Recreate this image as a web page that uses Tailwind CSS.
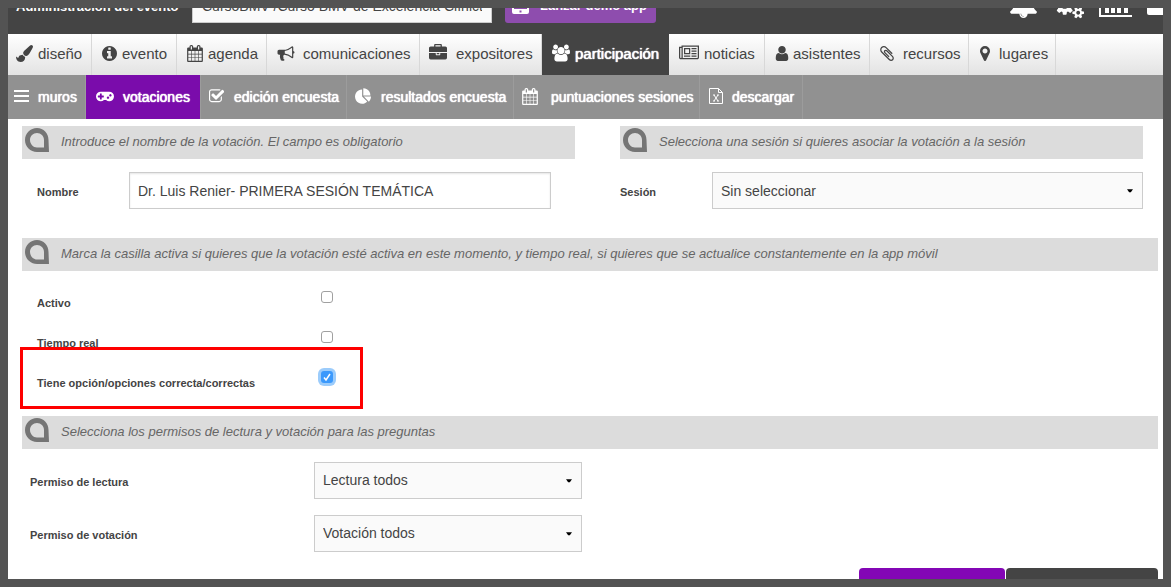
<!DOCTYPE html>
<html lang="es">
<head>
<meta charset="utf-8">
<title>Administración del evento</title>
<script src="https://cdn.jsdelivr.net/npm/@tailwindcss/browser@4"></script>
</head>
<body class="h-screen bg-[#535353] p-2 font-['Liberation_Sans',Arial,sans-serif] text-[#444]">
<svg class="hidden" aria-hidden="true">
  <symbol id="calendar" viewBox="64 0 1664 1792"><path d="M192 1664h288v-288h-288v288zm352 0h320v-288h-320v288zm-352-352h288v-320h-288v320zm352 0h320v-320h-320v320zm-352-384h288v-288h-288v288zm736 736h320v-288h-320v288zm-384-736h320v-288h-320v288zm768 736h288v-288h-288v288zm-384-352h320v-320h-320v320zm-352-864v-288q0-13-9.5-22.5t-22.5-9.5h-64q-13 0-22.5 9.5t-9.5 22.5v288q0 13 9.5 22.5t22.5 9.5h64q13 0 22.5-9.5t9.5-22.5zm736 864h288v-320h-288v320zm-384-384h320v-288h-320v288zm384 0h288v-288h-288v288zm32-480v-288q0-13-9.5-22.5t-22.5-9.5h-64q-13 0-22.5 9.5t-9.5 22.5v288q0 13 9.5 22.5t22.5 9.5h64q13 0 22.5-9.5t9.5-22.5zm384-64v1280q0 52-38 90t-90 38h-1408q-52 0-90-38t-38-90v-1280q0-52 38-90t90-38h128v-96q0-66 47-113t113-47h64q66 0 113 47t47 113v96h384v-96q0-66 47-113t113-47h64q66 0 113 47t47 113v96h128q52 0 90 38t38 90z"/></symbol>
  <symbol id="drop" viewBox="0 0 24 24"><path fill-rule="evenodd" d="M12 0C18.600 0 23.500 5.400 23.500 12L24 24H12C5.400 24 0 18.600 0 12S5.400 0 12 0ZM12 5C8.100 5 5 8.100 5 12S8.100 19.500 12 19.500H19V12C19 8.100 15.900 5 12 5Z"/></symbol>
  <symbol id="caret" viewBox="0 0 7 4"><path d="M0 0h7L4.500 3.500h-2z"/></symbol>
</svg>
<div class="flex h-full flex-col overflow-hidden bg-white">
  <header class="-mt-8 flex h-[58px] shrink-0 items-end overflow-hidden bg-[#444] pb-[11px] pl-2 text-white">
    <h1 class="h-[37px] w-44 shrink-0 pt-[3px] text-[13px] leading-9 font-bold whitespace-nowrap">Administración del evento</h1>
    <input aria-label="Evento" class="h-[37px] w-[300px] shrink-0 border border-[#ccc] bg-[#fafafa] px-[9px] pt-[2px] text-sm text-[#444]" value="CursoBMV /Curso BMV de Excelencia Clínict">
    <button class="ml-[13px] flex h-[37px] w-[151px] shrink-0 items-center gap-[11px] rounded-[3px] bg-[#8e4dae] pt-[2px] pl-[7px] text-[13px] font-bold whitespace-nowrap">
      <svg class="mb-[2px] h-[18px] w-[17px]" viewBox="0 0 17 18" fill="currentColor"><path fill-rule="evenodd" d="M2 0h13a2 2 0 0 1 2 2v14a2 2 0 0 1-2 2H2a2 2 0 0 1-2-2V2a2 2 0 0 1 2-2zM2 2v11h13V2zM7.500 14.500v2h2v-2z"/></svg>
      Lanzar demo app</button>
    <div class="ml-auto flex shrink-0 items-end">
      <a href="#" aria-label="Avisos" class="mb-[5px] mr-[18px]"><svg class="h-[29px] w-[27px]" viewBox="64 0 1664 1792" fill="currentColor"><path d="M912 1696q0-16-16-16-59 0-101.500-42.500t-42.500-101.500q0-16-16-16t-16 16q0 73 51.500 124.500t124.500 51.500q16 0 16-16zm816-288q0 52-38 90t-90 38h-448q0 106-75 181t-181 75-181-75-75-181h-448q-52 0-90-38t-38-90q50-42 91-88t85-119.500 74.500-158.500 50-206 19.500-260q0-152 117-282.500t307-158.500q-8-19-8-39 0-40 28-68t68-28 68 28 28 68q0 20-8 39 190 28 307 158.500t117 282.500q0 139 19.500 260t50 206 74.500 158.500 85 119.500 91 88z"/></svg></a>
      <a href="#" aria-label="Ajustes" class="mb-1 mr-[15px]"><svg class="h-[28px] w-[29px]" viewBox="0 0 1920 1792" fill="currentColor"><path d="M896 896q0-106-75-181t-181-75-181 75-75 181 75 181 181 75 181-75 75-181zm768 512q0-52-38-90t-90-38-90 38-38 90q0 53 37.500 90.500t90.500 37.500 90.500-37.500 37.500-90.500zm-384-603v185q0 10-7 19.500t-16 10.500l-155 24q-11 35-32 76 34 48 90 115 7 11 7 20 0 12-7 19-23 30-82.500 89.500t-78.500 59.500q-11 0-21-7l-115-90q-37 19-77 31-11 108-23 155-7 24-30 24h-186q-11 0-20-7.500t-10-17.500l-23-153q-34-10-75-31l-118 89q-7 7-20 7-11 0-21-8-144-133-144-160 0-9 7-19 10-14 41-53t47-61q-23-44-35-82l-152-24q-10-1-17-9.500t-7-19.500v-185q0-10 7-19.500t16-10.500l155-24q11-35 32-76-34-48-90-115-7-11-7-20 0-12 7-20 22-30 82-89t79-59q11 0 21 7l115 90q34-18 77-32 11-108 23-154 7-24 30-24h186q11 0 20 7.500t10 17.500l23 153q34 10 75 31l118-89q8-7 20-7 11 0 21 8 144 133 144 160 0 8-7 19-12 16-42 54t-45 60q23 48 34 82l152 23q10 2 17 10.500t7 19.500zm640 533v140q0 16-149 31-12 27-30 52 51 113 51 138 0 4-4 7-122 71-124 71-8 0-46-47t-52-68q-20 2-30 2t-30-2q-14 21-52 68t-46 47q-2 0-124-71-4-3-4-7 0-25 51-138-18-25-30-52-149-15-149-31v-140q0-16 149-31 13-29 30-52-51-113-51-138 0-4 4-7 4-2 35-20t59-34 30-16q8 0 46 46.500t52 67.500q20-2 30-2t30 2q51-71 92-112l6-2q4 0 124 70 4 3 4 7 0 25-51 138 17 23 30 52 149 15 149 31z"/></svg></a>
      <a href="#" aria-label="Estadísticas" class="mb-[6px] mr-[15px]"><svg class="h-[26px] w-[33px]" viewBox="0 0 33 26" fill="currentColor"><path d="M0 0h2v24h31v2H0zM6 12h4v10H6zM12 6h4v16h-4zM18 9h4v13h-4zM25 3h4v19h-4z"/></svg></a>
      <a href="#" aria-label="Pantalla" class="mb-2 h-6 w-4 overflow-hidden"><svg class="h-6 w-8" viewBox="0 0 32 24" fill="currentColor"><rect width="32" height="24" rx="2"/></svg></a>
    </div>
  </header>

  <nav aria-label="Secciones" class="flex h-[41px] shrink-0 bg-linear-to-b from-white to-[#e3e3e3] text-[15px] whitespace-nowrap [&>a]:flex [&>a]:shrink-0 [&>a]:items-center [&>a]:border-r [&>a]:border-[#d8d8d8] [&_svg]:shrink-0 [&_svg]:fill-current [&_svg]:mb-[3px]">
    <a href="#" class="w-[84px] gap-[5px] pl-2"><svg class="h-[17px] w-[17px]" viewBox="0 0 1792 1792"><path d="M1615 0q70 0 122.500 46.500t52.500 116.500q0 63-45 151-332 629-465 752-97 91-218 91-126 0-216.500-92.500t-90.500-219.500q0-128 92-212l638-579q59-54 130-54zm-909 1034q39 76 106.500 130t150.500 76l1 71q4 213-129.500 347t-348.500 134q-123 0-218-46.500t-152.500-127.500-86.500-183-29-220q7 5 41 30t62 44.500 59 36.500 46 17q41 0 55-37 25-66 57.500-112.500t69.500-76 88-47.500 103-25.500 125-10.500z"/></svg>diseño</a>
    <a href="#" class="w-[85px] gap-[5px] pl-[10px]"><svg class="h-[15px] w-[15px]" viewBox="128 128 1536 1536"><path d="M1152 1376v-160q0-14-9-23t-23-9h-96v-512q0-14-9-23t-23-9h-320q-14 0-23 9t-9 23v160q0 14 9 23t23 9h96v320h-96q-14 0-23 9t-9 23v160q0 14 9 23t23 9h448q14 0 23-9t9-23zm-128-896v-160q0-14-9-23t-23-9h-192q-14 0-23 9t-9 23v160q0 14 9 23t23 9h192q14 0 23-9t9-23zm640 416q0 209-103 385.500t-279.500 279.500-385.500 103-385.500-103-279.500-279.500-103-385.500 103-385.500 279.500-279.500 385.500-103 385.500 103 279.500 279.500 103 385.500z"/></svg>evento</a>
    <a href="#" class="w-[90px] gap-[5px] pl-[10px]"><svg class="h-[17px] w-4"><use href="#calendar"/></svg>agenda</a>
    <a href="#" class="w-[153px] gap-2 pl-[10px]"><svg class="h-[17px] w-[18px]" viewBox="0 0 1792 1792"><path d="M1664 640q53 0 90.500 37.500t37.500 90.500-37.500 90.500-90.500 37.500v384q0 52-38 90t-90 38q-417-347-812-380-58 19-91 66t-31 100.500 40 92.500q-20 33-23 65.500t6 58 33.500 55 48 50 61.500 50.500q-29 58-111.500 83t-168.500 11.500-132-55.500q-7-23-29.500-87.500t-32-94.500-23-89-15-101 3.500-98.500 22-110.500h-122q-66 0-113-47t-47-113v-192q0-66 47-113t113-47h480q435 0 896-384 52 0 90 38t38 90v384zm-128 604v-954q-394 302-768 343v270q377 42 768 341z"/></svg>comunicaciones</a>
    <a href="#" class="w-[122px] gap-[9px] pl-[9px]"><svg class="h-[18px] w-[18px]" viewBox="0 0 1792 1792"><path d="M640 256h512v-128h-512v128zm1152 640v480q0 66-47 113t-113 47h-1472q-66 0-113-47t-47-113v-480h672v160q0 26 19 45t45 19h320q26 0 45-19t19-45v-160h672zm-768 0v128h-256v-128h256zm768-480v384h-1792v-384q0-66 47-113t113-47h352v-160q0-40 28-68t68-28h576q40 0 68 28t28 68v160h352q66 0 113 47t47 113z"/></svg>expositores</a>
    <a href="#" aria-current="page" class="w-[127px] gap-[5px] border-r-0! bg-[#444] pl-[10px] text-white [text-shadow:0_0_1px_#fff,0_0_1px_#fff]"><svg class="h-[18px] w-[18px]" viewBox="64 0 1920 1792"><path d="M657 896q-162 5-265 128h-134q-82 0-138-40.500t-56-118.500q0-353 124-353 6 0 43.500 21t97.500 42.500 119 21.500q67 0 133-23-5 37-5 66 0 139 81 256zm1071 637q0 120-73 189.500t-194 69.500h-874q-121 0-194-69.500t-73-189.500q0-53 3.500-103.500t14-109 26.500-108.500 43-97.500 62-81 85.500-53.500 111.500-20q10 0 43 21.500t73 48 107 48 135 21.500 135-21.500 107-48 73-48 43-21.500q61 0 111.500 20t85.500 53.500 62 81 43 97.500 26.500 108.500 14 109 3.500 103.500zm-1024-1277q0 106-75 181t-181 75-181-75-75-181 75-181 181-75 181 75 75 181zm704 384q0 159-112.500 271.500t-271.500 112.500-271.500-112.500-112.500-271.500 112.500-271.500 271.500-112.500 271.500 112.500 112.500 271.500zm576 225q0 78-56 118.500t-138 40.500h-134q-103-123-265-128 81-117 81-256 0-29-5-66 66 23 133 23 59 0 119-21.500t97.500-42.500 43.500-21q124 0 124 353zm-128-609q0 106-75 181t-181 75-181-75-75-181 75-181 181-75 181 75 75 181z"/></svg>participación</a>
    <a href="#" class="w-24 gap-[5px] pl-[10px]"><svg class="h-[18px] w-5" viewBox="0 0 2048 1792"><path d="M1024 512h-384v384h384v-384zm128 640v128h-640v-128h640zm0-768v640h-640v-640h640zm640 768v128h-512v-128h512zm0-256v128h-512v-128h512zm0-256v128h-512v-128h512zm0-256v128h-512v-128h512zm-1536 960v-960h-128v960q0 26 19 45t45 19 45-19 19-45zm1664 0v-1088h-1536v1088q0 33-11 64h1483q26 0 45-19t19-45zm128-1216v1216q0 80-56 136t-136 56h-1664q-80 0-136-56t-56-136v-1088h256v-128h1792z"/></svg>noticias</a>
    <a href="#" class="w-[105px] gap-1 pl-[10px]"><svg class="h-[15px] w-[14px]" viewBox="256 128 1280 1536"><path d="M1536 1399q0 109-62.500 187t-150.500 78h-854q-88 0-150.500-78t-62.500-187q0-85 8.500-160.500t31.500-152 58.500-131 94-89 134.500-34.500q131 128 313 128t313-128q76 0 134.500 34.500t94 89 58.500 131 31.500 152 8.500 160.500zm-256-887q0 159-112.500 271.500t-271.500 112.500-271.500-112.500-112.500-271.500 112.500-271.500 271.500-112.500 271.500 112.500 112.500 271.500z"/></svg>asistentes</a>
    <a href="#" class="w-[99px] gap-[9px] pl-[10px]"><svg class="h-[15px] w-[14px]" viewBox="196 128 1400 1536"><path d="M1596 1385q0 117-79 196t-196 79q-135 0-235-100l-777-776q-113-115-113-271 0-159 110-270t269-111q158 0 273 113l605 606q10 10 10 22 0 16-30.500 46.500t-46.500 30.500q-13 0-23-10l-606-607q-79-77-181-77-106 0-179 75t-73 181q0 105 76 181l776 777q63 63 145 63 64 0 106-42t42-106q0-82-63-145l-581-581q-26-24-60-24-29 0-48 19t-19 48q0 32 25 59l410 410q10 10 10 22 0 16-31 47t-47 31q-12 0-22-10l-410-410q-63-61-63-149 0-82 57-139t139-57q88 0 149 63l581 581q100 98 100 235z"/></svg>recursos</a>
    <a href="#" class="w-[87px] gap-[9px] pl-[11px]"><svg class="h-[15px] w-[10px]" viewBox="384 128 1024 1536"><path d="M1152 640q0-106-75-181t-181-75-181 75-75 181 75 181 181 75 181-75 75-181zm256 0q0 109-33 179l-364 774q-16 33-47.500 52t-67.500 19-67.500-19-46.500-52l-365-774q-33-70-33-179 0-212 150-362t362-150 362 150 150 362z"/></svg>lugares</a>
  </nav>

  <nav aria-label="Participación" class="flex h-11 shrink-0 bg-[#919191] text-sm whitespace-nowrap text-white [text-shadow:0_0_1px_#fff,0_0_1px_#fff] [&>a]:flex [&>a]:shrink-0 [&>a]:items-center [&>a]:border-r [&>a]:border-[#9c9c9c] [&_svg]:mb-[2px] [&_svg]:shrink-0 [&_svg]:fill-current">
    <a href="#" class="w-[78px] gap-[9px] pl-[6px]"><svg class="h-3 w-[15px]" viewBox="0 0 15 12"><path d="M0 0h15v2H0zM0 5h15v2H0zM0 10h15v2H0z"/></svg>muros</a>
    <a href="#" aria-current="page" class="w-[115px] gap-[9px] bg-[#7a0cab] pl-[10px]"><svg class="h-[17px] w-[18px]" viewBox="0 128 1920 1792"><path d="M832 1088v-128q0-14-9-23t-23-9h-192v-192q0-14-9-23t-23-9h-128q-14 0-23 9t-9 23v192h-192q-14 0-23 9t-9 23v128q0 14 9 23t23 9h192v192q0 14 9 23t23 9h128q14 0 23-9t9-23v-192h192q14 0 23-9t9-23zm576 64q0-53-37.500-90.500t-90.500-37.500-90.500 37.500-37.500 90.500 37.500 90.500 90.500 37.500 90.500-37.500 37.500-90.500zm256-256q0-53-37.500-90.500t-90.500-37.500-90.500 37.500-37.500 90.500 37.500 90.500 90.500 37.500 90.500-37.500 37.500-90.500zm256 128q0 212-150 362t-362 150q-192 0-338-128h-220q-146 128-338 128-212 0-362-150t-150-362 150-362 362-150h896q212 0 362 150t150 362z"/></svg>votaciones</a>
    <a href="#" class="w-[146px] gap-[10px] pl-2"><svg class="h-[14px] w-[15px]" viewBox="64 160 1640 1408"><path d="M1472 930v318q0 119-84.500 203.500t-203.500 84.500h-832q-119 0-203.500-84.500t-84.500-203.500v-832q0-119 84.500-203.500t203.500-84.500h832q63 0 117 25 15 7 18 23 3 17-9 29l-49 49q-10 10-23 10-3 0-9-2-23-6-45-6h-832q-66 0-113 47t-47 113v832q0 66 47 113t113 47h832q66 0 113-47t47-113v-254q0-13 9-22l64-64q10-10 23-10 6 0 12 3 20 8 20 29zm231-489l-814 814q-24 24-57 24t-57-24l-430-430q-24-24-24-57t24-57l110-110q24-24 57-24t57 24l263 263 647-647q24-24 57-24t57 24l110 110q24 24 24 57t-24 57z"/></svg>edición encuesta</a>
    <a href="#" class="w-[167px] gap-[10px] pl-2"><svg class="h-4 w-4" viewBox="0 0 1728 1664"><path d="M768 890l546 546q-106 108-247.500 168t-298.500 60q-209 0-385.500-103t-279.500-279.500-103-385.500 103-385.500 279.500-279.500 385.500-103v762zm187 6h773q0 157-60 298.500t-168 247.500zm709-128h-768v-768q209 0 385.500 103t279.500 279.500 103 385.500z"/></svg>resultados encuesta</a>
    <a href="#" class="w-[186px] gap-[13px] pl-2"><svg class="h-[17px] w-4"><use href="#calendar"/></svg>puntuaciones sesiones</a>
    <a href="#" class="w-[103px] gap-[9px] pl-[9px]"><svg class="h-4 w-[14px]" viewBox="0 0 14 16"><path fill="none" stroke="currentColor" d="M.500.500h9l4 4v11H.500zM9.500.500v4h4M5 7l4 6M9 7l-4 6M4 7h2M8 7h2M4 13h2M8 13h2"/></svg>descargar</a>
  </nav>

  <form class="flex flex-col pt-[7px] pr-[5px] pl-[14px] text-[11px] font-bold">
    <div class="grid grid-cols-[553fr_523fr] gap-x-[45px] gap-y-[13px] pr-[15px]">
      <p class="flex h-[33px] gap-3 bg-[#dcdcdc] pt-[2px] pl-[3px] text-[13px] font-normal text-[#666] italic"><svg class="h-6 w-6 fill-[#757575]"><use href="#drop"/></svg><span class="leading-7">Introduce el nombre de la votación. El campo es obligatorio</span></p>
      <p class="flex h-[33px] gap-3 bg-[#dcdcdc] pt-[2px] pl-[3px] text-[13px] font-normal text-[#666] italic"><svg class="h-6 w-6 fill-[#757575]"><use href="#drop"/></svg><span class="leading-7">Selecciona una sesión si quieres asociar la votación a la sesión</span></p>
      <div class="flex items-center pr-6 pl-[15px]">
        <label for="nombre" class="w-[92px] shrink-0 pt-1">Nombre</label>
        <input id="nombre" class="h-[37px] min-w-0 flex-1 border border-[#ccc] bg-white px-2 text-sm font-normal shadow-[inset_0_1px_2px_#e5e5e5]" value="Dr. Luis Renier- PRIMERA SESIÓN TEMÁTICA">
      </div>
      <div class="flex items-center">
        <label for="sesion" class="w-[92px] shrink-0 pt-1">Sesión</label>
        <div class="relative flex-1">
          <select id="sesion" class="block h-[37px] w-full appearance-none border border-[#ccc] bg-[#fafafa] px-2 text-sm font-normal"><option>Sin seleccionar</option></select>
          <svg class="pointer-events-none absolute top-[17px] right-[10px] h-1 w-[6px] fill-black"><use href="#caret"/></svg>
        </div>
      </div>
    </div>

    <p class="mt-[29px] flex h-[33px] gap-3 bg-[#dcdcdc] pt-[2px] pl-[3px] text-[13px] font-normal text-[#666] italic"><svg class="h-6 w-6 fill-[#757575]"><use href="#drop"/></svg><span class="leading-7">Marca la casilla activa si quieres que la votación esté activa en este momento, y tiempo real, si quieres que se actualice constantemente en la app móvil</span></p>

    <div class="relative mt-[6px] mb-[19px] flex flex-col pl-[15px]">
      <div class="flex h-10 items-center"><label for="activo" class="w-[284px] pt-3">Activo</label><input id="activo" type="checkbox" class="h-3 w-3 appearance-none rounded-[3px] border border-[#a0a0a0] bg-white"></div>
      <div class="flex h-10 items-center"><label for="tiempo" class="w-[284px] pt-3">Tiempo real</label><input id="tiempo" type="checkbox" class="h-3 w-3 appearance-none rounded-[3px] border border-[#a0a0a0] bg-white"></div>
      <div class="flex h-10 items-center"><label for="correcta" class="w-[284px] pt-3">Tiene opción/opciones correcta/correctas</label>
        <span class="relative flex h-3 w-3"><input id="correcta" type="checkbox" checked class="h-3 w-3 appearance-none rounded-[3px] bg-[#3b99fc] ring-3 ring-[#9cccfb]"><svg class="pointer-events-none absolute inset-0 h-3 w-3 fill-none stroke-white stroke-[1.5]" viewBox="0 0 12 12"><path d="M3 6.500L5 9l4-6"/></svg></span>
      </div>
      <div class="absolute top-[70px] -left-[2px] h-[62px] w-[343px] border-3 border-[#fe0000]"></div>
    </div>

    <p class="flex h-[33px] gap-3 bg-[#dcdcdc] pt-[2px] pl-[3px] text-[13px] font-normal text-[#666] italic"><svg class="h-6 w-6 fill-[#757575]"><use href="#drop"/></svg><span class="leading-7">Selecciona los permisos de lectura y votación para las preguntas</span></p>

    <div class="mt-[13px] flex flex-col gap-4 pl-2">
      <div class="flex items-center">
        <label for="lectura" class="w-[284px] shrink-0 pt-1">Permiso de lectura</label>
        <div class="relative w-[268px]">
          <select id="lectura" class="block h-[37px] w-full appearance-none border border-[#ccc] bg-[#fafafa] px-2 pb-[2px] text-sm font-normal"><option>Lectura todos</option></select>
          <svg class="pointer-events-none absolute top-[17px] right-[10px] h-1 w-[6px] fill-black"><use href="#caret"/></svg>
        </div>
      </div>
      <div class="flex items-center">
        <label for="votacion" class="w-[284px] shrink-0 pt-1">Permiso de votación</label>
        <div class="relative w-[268px]">
          <select id="votacion" class="block h-[37px] w-full appearance-none border border-[#ccc] bg-[#fafafa] px-2 pb-[2px] text-sm font-normal"><option>Votación todos</option></select>
          <svg class="pointer-events-none absolute top-[17px] right-[10px] h-1 w-[6px] fill-black"><use href="#caret"/></svg>
        </div>
      </div>
    </div>

    <div class="mt-4 flex justify-end gap-px">
      <button type="submit" aria-label="Guardar" class="h-9 w-[146px] rounded-[4px] bg-[#8306b5]"></button>
      <button type="button" aria-label="Cancelar" class="h-9 w-[152px] rounded-[4px] bg-[#444]"></button>
    </div>
  </form>
</div>
</body>
</html>
